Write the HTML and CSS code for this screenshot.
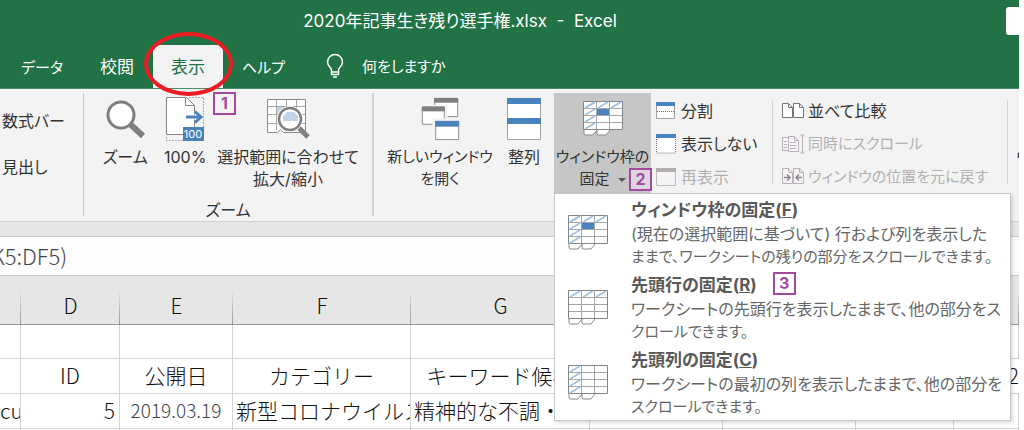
FILE: index.html
```html
<!DOCTYPE html>
<html lang="ja">
<head>
<meta charset="utf-8">
<title>2020年記事生き残り選手権.xlsx - Excel</title>
<link rel="stylesheet" href="styles.css">
</head>
<body>
<svg class="defs" aria-hidden="true">
  <symbol id="sheet" viewBox="0 0 40 36">
    <path d="M1 29v4l1 1h8l4-5M14 29v4l1 1h8l4-5" fill="#fff" stroke="#8a8a8a"/>
    <path d="M.5.500h39v28H.5z" fill="#fff" stroke="#858585"/>
    <path d="M13.500 1v27M26.500 1v27M1 7.500h38M1 14.500h38M1 21.500h38" fill="none" stroke="#a6a6a6"/>
  </symbol>
  <symbol id="hatch-row" viewBox="0 0 40 36"><path d="M2 7L12 1M15 7L25 1M28 7L38 1" stroke="#9dbfe3" stroke-width="1.500"/></symbol>
  <symbol id="hatch-col" viewBox="0 0 40 36"><path d="M2 7L12 1M2 14L12 8M2 21L12 15M2 28L12 22" stroke="#9dbfe3" stroke-width="1.500"/></symbol>
  <symbol id="freeze" viewBox="0 0 40 36">
    <use href="#sheet"/><use href="#hatch-row"/><use href="#hatch-col"/>
    <path d="M14 8h12v6H14z" fill="#4a82bd"/>
  </symbol>
</svg>
<div class="app">
  <header class="top">
    <div class="titlebar">
      <h1 class="title">2020年記事生き残り選手権.xlsx&nbsp; -&nbsp; Excel</h1>
      <button class="account" aria-label="アカウント"></button>
    </div>
    <nav class="tabs">
      <a class="tab kana" href="#data">データ</a>
      <a class="tab" href="#review">校閲</a>
      <a class="tab active" href="#view">表示<span class="ring"></span><span class="mark mark-tab">1</span></a>
      <a class="tab kana" href="#help">ヘルプ</a>
      <a class="tell kana" href="#tell">
        <svg width="18" height="26" viewBox="0 0 18 26" fill="none" stroke="#fff" stroke-width="1.500"><path d="M5.500 18v-2c0-2-4-3.500-4-8a7.500 7.500 0 0 1 15 0c0 4.500-4 6-4 8v2zM5.500 18v2.500h7V18M7 23h4"/></svg>
        何をしますか</a>
    </nav>
  </header>

  <section class="ribbon">
    <div class="group show">
      <button class="plain">数式バー</button>
      <button class="plain">見出し</button>
    </div>
    <div class="group zoom">
      <div class="buttons">
        <button class="big zoom-one">
          <svg width="40" height="44" viewBox="0 0 40 44"><path d="M25 27L38 39" stroke="#7f7f7f" stroke-width="6"/><circle cx="16" cy="18" r="13" fill="#fff" stroke="#7f7f7f" stroke-width="3"/></svg>
          <span>ズーム</span></button>
        <button class="big zoom-one">
          <svg width="40" height="44" viewBox="0 0 40 44">
            <path d="M24 .500h14.500v43H1.500V40" fill="none" stroke="#aaa" stroke-dasharray="2 1"/>
            <path d="M1.500.500h20l8 8v29h-28z" fill="#fff" stroke="#858585"/><path d="M20.500.500v8h9" fill="none" stroke="#858585"/>
            <path d="M21 17.500h12v5H21z" fill="#fff"/><path d="M21 20h14M30 14.500l6 5.500-6 5.500" fill="none" stroke="#4a82bd" stroke-width="3"/>
            <path d="M18 30h21v14H18z" fill="#4a82bd"/><text class="tiny" x="28" y="41">100</text>
          </svg>
          <span>100%</span></button>
        <button class="big">
          <svg width="44" height="44" viewBox="0 0 44 44">
            <path d="M1.500 2.500h38v33h-22l-3-3-3 3h-10z" fill="#fff" stroke="#8a8a8a"/>
            <path d="M10.500 3v30M20.500 3v30M30.500 3v30M2 9.500h37M2 17.500h37M2 26.500h37" stroke="#a6a6a6"/>
            <path d="M11 10h9v7h-9z" fill="#c1d4ea"/>
            <path d="M31 29L42 40" stroke="#7f7f7f" stroke-width="5"/>
            <circle cx="24" cy="22" r="13" fill="#fff"/><circle cx="24" cy="22" r="11" fill="#fff" stroke="#7f7f7f" stroke-width="2.500"/>
            <path d="M17 24v-5l4-4h7l4 4v5z" fill="#c1d4ea"/>
          </svg>
          <span>選択範囲に合わせて<br>拡大/縮小</span></button>
      </div>
      <div class="caption">ズーム</div>
    </div>
    <div class="group window">
      <button class="big new-window kana">
        <svg width="40" height="46" viewBox="0 0 40 46" fill="#fff" stroke="#8a8a8a">
          <path d="M14.500 1.500h24v19h-24z"/><path d="M14 1h25v5H14z" fill="#7f7f7f" stroke="none"/>
          <path d="M.5 9.500h26v21H.5z" stroke="#f3f3f3" stroke-width="3"/><path d="M1.500 10.500h23v18h-23z"/><path d="M1 10h24v5H1z" fill="#7f7f7f" stroke="none"/>
          <path d="M13.500 23.500h27v22h-27z" stroke="#f3f3f3" stroke-width="3"/><path d="M15.500 25.500h24v19h-24z"/><path d="M15 25h25v6H15z" fill="#4a82bd" stroke="none"/>
        </svg>
        <span>新しいウィンドウ<br>を開く</span></button>
      <button class="big arrange">
        <svg width="36" height="44" viewBox="0 0 36 44"><path d="M1.500 1.500h33v41h-33z" fill="#fff" stroke="#a0a0a0"/><path d="M1 1h34v6H1zM1 21h34v6H1z" fill="#4a82bd"/></svg>
        <span>整列</span></button>
      <div class="freeze">
        <button class="big freeze-button kana" aria-expanded="true">
          <svg width="40" height="44" viewBox="0 -4 40 44"><use href="#freeze" width="40" height="36"/></svg>
          <span>ウィンドウ枠の<br>固定<i class="caret"></i></span></button>
        <span class="mark mark-freeze">2</span>
        <div class="menu" role="menu">
          <button class="item" role="menuitem">
            <svg width="40" height="36"><use href="#freeze"/></svg>
            <span><strong>ウィンドウ枠の固定(<u>F</u>)</strong>
            <span class="desc">(現在の選択範囲に基づいて) 行および列を表示した<br><span class="kana">ままで、ワークシートの残りの部分をスクロールできます。</span></span></span>
          </button>
          <button class="item" role="menuitem">
            <svg width="40" height="36"><use href="#sheet"/><use href="#hatch-row"/></svg>
            <span><strong>先頭行の固定(<u>R</u>)<span class="mark mark-row">3</span></strong>
            <span class="desc">ワークシートの先頭行を表示したままで、他の部分をス<br><span class="kana">クロールできます。</span></span></span>
          </button>
          <button class="item" role="menuitem">
            <svg width="40" height="36"><use href="#sheet"/><use href="#hatch-col"/></svg>
            <span><strong>先頭列の固定(<u>C</u>)</strong>
            <span class="desc">ワークシートの最初の列を表示したままで、他の部分を<br><span class="kana">スクロールできます。</span></span></span>
          </button>
        </div>
      </div>
      <div class="stack panes">
        <button class="small"><svg width="22" height="20" viewBox="0 0 22 20"><path d="M1.500 1.500h18v16h-18z" fill="#fff" stroke="#a0a0a0"/><path d="M1 1h19v4H1z" fill="#4a82bd"/><path d="M2 10.500h17" stroke="#4a82bd" stroke-dasharray="1 1"/></svg>分割</button>
        <button class="small"><svg width="22" height="20" viewBox="0 0 22 20"><path d="M1.500 3v16h19V3" fill="#fff" stroke="#777" stroke-dasharray="1 1"/><path d="M1 0h20v4H1z" fill="#4a82bd"/></svg>表示しない</button>
        <button class="small" disabled><svg width="22" height="20" viewBox="0 0 22 20"><path d="M1.500 1.500h19v17h-19z" fill="#f6f3f6" stroke="#bbb"/><path d="M1 1h20v4H1z" fill="#b0acb0"/></svg>再表示</button>
      </div>
      <div class="stack compare">
        <button class="small"><svg width="24" height="20" viewBox="0 0 24 20" fill="#fff" stroke="#777"><path d="M1.500 2.500h6l4 4v10h-10zM7.500 2.500v4h4M12.500 2.500h6l4 4v10h-10zM18.500 2.500v4h4"/></svg>並べて比較</button>
        <button class="small kana" disabled><svg width="24" height="24" viewBox="0 0 24 24" fill="none" stroke="#b9b0b9"><path d="M7.500 5.500h-6v13h6M7.500 4.500h6l4 4v11h-10zM13.500 4.500v4h4M3 9.500h3M3 12.500h3M3 15.500h3M9 10.500h6M9 13.500h6M9 16.500h6M21.500 2v20M19 4.500L21.500 2 24 4.500M19 19.500l2.500 2.500 2.500-2.500"/></svg>同時にスクロール</button>
        <button class="small kana" disabled><svg width="24" height="20" viewBox="0 0 24 20" fill="none" stroke="#b9b0b9"><path d="M1.500 1.500h6l4 4v11h-10zM7.500 1.500v4h4M12.500 1.500h6l4 4v11h-10zM18.500 1.500v4h4"/><path d="M3 10.500h6M6 7.500l3 3-3 3M21 10.500h-6M18 7.500l-3 3 3 3" stroke="#8f868f" stroke-width="1.500"/></svg>ウィンドウの位置を元に戻す</button>
      </div>
      <button class="big switch"><span>ウィンドウの<br>切り替え</span></button>
    </div>
  </section>

  <div class="formula"><input class="formula-input" aria-label="数式バー" value="K5:DF5)"></div>

  <table class="grid">
    <colgroup><col class="c"><col class="d"><col class="e"><col class="f"><col class="g"><col class="h"><col class="h"><col class="j"><col></colgroup>
    <thead><tr><th></th><th>D</th><th>E</th><th>F</th><th>G</th><th></th><th></th><th></th><th></th></tr></thead>
    <tbody>
      <tr><td></td><td></td><td></td><td></td><td></td><td></td><td></td><td></td><td></td></tr>
      <tr class="heads"><td></td><td>ID</td><td>公開日</td><td>カテゴリー</td><td>キーワード候補</td><td></td><td></td><td></td><td class="num">2</td></tr>
      <tr><td>cu</td><td class="num">5</td><td class="date">2019.03.19</td><td class="text">新型コロナウイルス</td><td class="text">精神的な不調・</td><td></td><td></td><td></td><td></td></tr>
      <tr><td></td><td></td><td></td><td></td><td></td><td></td><td></td><td></td><td></td></tr>
    </tbody>
  </table>
</div>
</body>
</html>
```

FILE: styles.css
```css
* { box-sizing: border-box; }
body {
  margin: 0;
  background: #fff;
  color: #333;
  font: 17px/22px Inter, "Noto Sans CJK JP", sans-serif;
  font-feature-settings: "palt";
}
button {
  margin: 0;
  padding: 0;
  border: 0;
  background: none;
  color: inherit;
  font: inherit;
  font-feature-settings: inherit;
  white-space: nowrap;
}
svg { display: block; flex: none; overflow: visible; }
.defs { position: absolute; width: 0; height: 0; }
.app { margin-right: 5px; height: 100vh; overflow: hidden; }

.top { background: #217346; color: #fff; border-bottom: 1px solid #4b8c69; }
.titlebar { display: flex; align-items: center; height: 45px; padding-bottom: 4px; }
.title { flex: 1; margin: 0; padding-right: 86px; font-size: 17px; font-weight: 400; text-align: center; }
.account { width: 13px; height: 28px; background: #fff; border-radius: 3px 0 0 3px; }
.tabs { display: flex; gap: 1px; height: 43px; padding-left: 3px; }
.tab, .tell { color: inherit; text-decoration: none; line-height: 45px; white-space: nowrap; }
.tab { padding: 0 18px; }
.tab.active { position: relative; background: #f3f3f3; color: #217346; }
.tell { display: flex; align-items: center; gap: 18px; padding-left: 22px; }
.ring { position: absolute; z-index: 2; inset: -13px -10px -8px -9px; border: 4px solid #ed1c24; border-radius: 50%; }

.mark {
  display: inline-block;
  width: 23px;
  height: 23px;
  border: 2px solid #a349a4;
  background: #f3f3f3;
  color: #a349a4;
  font-size: 16px;
  font-weight: 700;
  line-height: 19px;
  text-align: center;
}
.mark-tab { position: absolute; z-index: 2; top: 47px; right: -13px; }
.mark-freeze { position: absolute; z-index: 2; right: -1px; bottom: 2px; background: #dcd8dc; }
.mark-row { margin-left: 16px; background: #fff; vertical-align: top; }

.ribbon { display: flex; height: 133px; padding-top: 4px; background: #f3f3f3; border-bottom: 1px solid #d0d0d0; font-size: 16px; }
.kana { font-size: 15px; }
.group { height: 123px; }
.show { display: flex; flex-direction: column; align-items: flex-start; gap: 24px; width: 84px; padding: 17px 0 0 2px; border-right: 1px solid #c6c6c6; }
.zoom { width: 290px; border-right: 2px solid #d2d2d2; }
.buttons { display: flex; justify-content: center; gap: 4px; height: 106px; }
.caption { text-align: center; }
.big { display: flex; flex: none; flex-direction: column; align-items: center; justify-content: flex-start; gap: 5px; height: 100px; padding-top: 4px; text-align: center; }
.big svg { height: 44px; }
.tiny { fill: #fff; font-size: 11px; text-anchor: middle; }
.zoom-one { width: 56px; }
.window { display: flex; flex: 1; min-width: 0; padding-left: 12px; }
.new-window { width: 108px; }
.arrange { width: 60px; }
.freeze { position: relative; flex: none; width: 97px; height: 100px; background: #c6c6c6; }
.freeze-button { width: 97px; }
.caret { display: inline-block; margin-left: 8px; border: 4px solid transparent; border-top-color: #555; border-bottom: 0; vertical-align: middle; }
.stack { display: flex; flex: none; flex-direction: column; gap: 11px; padding-top: 7px; height: 98px; }
.small { display: flex; align-items: center; gap: 4px; height: 22px; }
.small:disabled { color: #b1b1b1; }
.panes { width: 121px; padding-left: 4px; }
.compare { width: 236px; margin-top: 7px; padding: 0 0 0 8px; height: 84px; border: solid #d2d2d2; border-width: 0 1px; }
.compare .small { gap: 3px; }
.switch { margin-left: 8px; padding-top: 53px; }

.menu {
  position: absolute;
  z-index: 1;
  top: 100%;
  left: 0;
  width: 457px;
  height: 228px;
  padding-top: 3px;
  border: 1px solid #c6c6c6;
  background: #fff;
  box-shadow: 2px 2px 3px #0002;
}
.item { display: flex; gap: 23px; height: 75px; padding-left: 13px; color: #595959; text-align: left; }
.item svg { margin-top: 18px; }
.item strong, .desc { display: block; }
.item strong { height: 26px; font-size: 17px; line-height: 26px; }
.desc { color: #666; font-size: 16px; }

.formula { height: 54px; padding-top: 14px; background: #e6e6e6; border-bottom: 1px solid #c9c9c9; }
.formula-input {
  display: block;
  width: 100%;
  height: 39px;
  padding: 0 0 3px;
  border: 0;
  border-top: 1px solid #c9c9c9;
  background: #fdfdfd;
  color: #444;
  font: 300 22px "Noto Sans CJK JP", sans-serif;
  text-indent: -9px;
}

.grid { width: 100%; border-collapse: separate; border-spacing: 0; table-layout: fixed; font: 300 21px/28px "Noto Sans CJK JP", sans-serif; font-feature-settings: normal; color: #111; }
.c { width: 21px; }
.d { width: 99px; }
.e { width: 113px; }
.f { width: 178px; }
.g { width: 179px; }
.h { width: 133px; }
.j { width: 98px; }
.grid th {
  height: 49px;
  padding: 10px 0 0;
  border-bottom: 1px solid #999;
  background: linear-gradient(#e6e6e6, #999) right bottom / 1px 34px no-repeat #e6e6e6;
  font-weight: 300;
}
.grid td { height: 35px; padding: 0 0 2px; border: solid #d4d4d4; border-width: 0 1px 1px 0; overflow: hidden; white-space: nowrap; }
.grid tbody tr:first-child td { height: 34px; }
.heads { text-align: center; }
.grid .num { padding-right: 4px; text-align: right; }
.grid .num:last-child { padding-right: 0; border-right: 0; }
.grid .date { color: #444; font-size: 19px; text-align: center; }
.grid .text { padding-left: 3px; }
```
